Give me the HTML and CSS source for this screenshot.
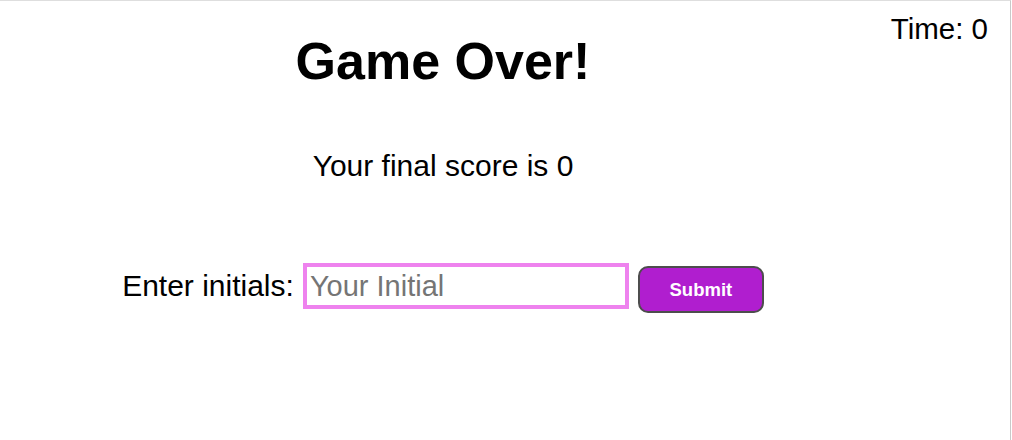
FILE: index.html
```html
<!DOCTYPE html>
<html lang="en">
<head>
<meta charset="utf-8">
<title>Game Over</title>
<link rel="stylesheet" href="styles.css">
</head>
<body>
<div class="page">
  <main class="main">
    <h1 class="title">Game Over!</h1>
    <p class="score">Your final score is <span>0</span></p>
    <form class="entry">
      <label class="entry-label" for="initials">Enter initials:</label>
      <input class="entry-input" id="initials" type="text" placeholder="Your Initial">
      <button class="entry-btn" type="button">Submit</button>
    </form>
  </main>
  <aside class="aside">
    <div class="timer">Time: <span>0</span></div>
  </aside>
</div>
</body>
</html>
```
FILE: styles.css
```css
html, body {
  margin: 0;
  padding: 0;
  background: #fff;
}
body {
  font-family: "Liberation Sans", Arial, Helvetica, sans-serif;
  color: #000;
}
.page {
  box-sizing: border-box;
  width: 1011px;
  height: 440px;
  border-top: 1px solid #dedede;
  border-right: 1px solid #c9c9c9;
  display: flex;
}
.main {
  flex: 0 0 886px;
  text-align: center;
}
.aside {
  flex: 1;
  text-align: right;
  padding: 11px 22px 0 0;
}
.timer {
  font-size: 29.5px;
  line-height: 34px;
}
.title {
  margin: 30px 0 0;
  font-size: 52px;
  line-height: 60px;
  font-weight: bold;
}
.score {
  margin: 58px 0 0;
  font-size: 30px;
  line-height: 34px;
}
.entry {
  margin: 80px 0 0;
  display: flex;
  justify-content: center;
  align-items: baseline;
  gap: 9px;
}
.entry-label {
  font-size: 30px;
  line-height: 34px;
}
.entry-input {
  box-sizing: border-box;
  width: 326px;
  height: 46px;
  border: 4px solid #ee82ee;
  padding: 0 3px;
  margin: 0;
  font-family: "Liberation Sans", Arial, sans-serif;
  font-size: 29px;
  color: #000;
  background: #fff;
  outline: none;
}
.entry-input::placeholder {
  color: #757575;
}
.entry-btn {
  box-sizing: border-box;
  width: 126px;
  height: 47px;
  margin: 0;
  border: 2px solid #4d4d4d;
  border-radius: 10px;
  background: #b01ecf;
  color: #fff;
  font-family: "Liberation Sans", Arial, sans-serif;
  font-size: 18.5px;
  font-weight: bold;
  padding: 0;
}
```
